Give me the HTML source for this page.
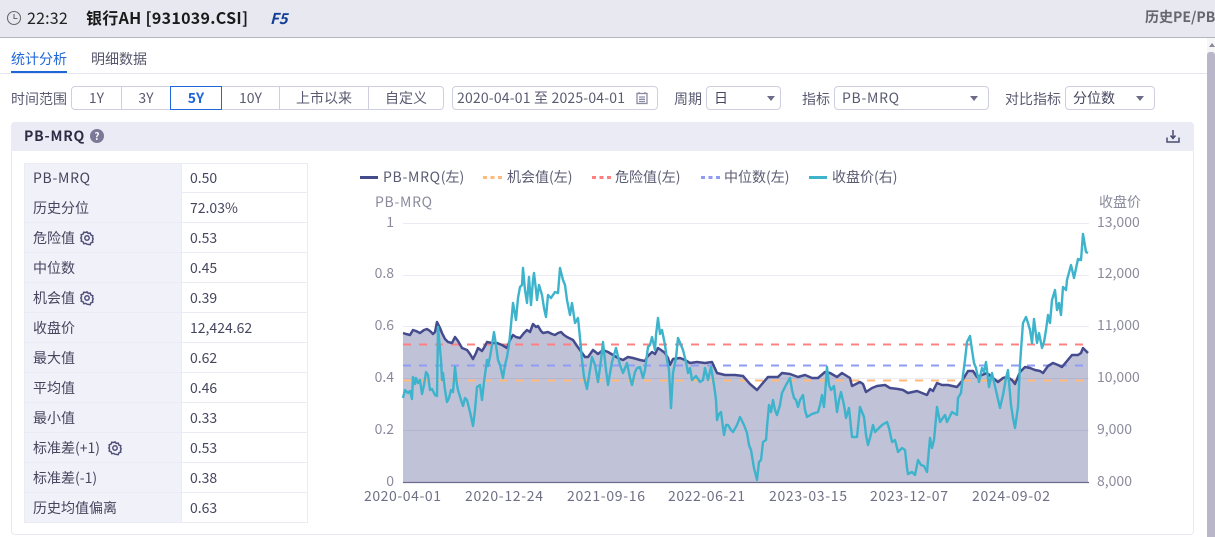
<!DOCTYPE html>
<html><head><meta charset="utf-8">
<style>
html,body{margin:0;padding:0;background:#fff}
body{width:1215px;height:537px;overflow:hidden;position:relative;font-family:"Noto Sans CJK SC","Liberation Sans",sans-serif;font-size:14px;color:#45455e}
.a{position:absolute;white-space:nowrap}
.box{position:absolute;box-sizing:border-box;border:1px solid #cfcfe2;border-radius:4px;height:24px;top:86px;line-height:22px;background:#fff}
.seg{position:absolute;top:86px;height:24px;box-sizing:border-box;line-height:22px;text-align:center;border:1px solid #cfcfe2;border-left:none;color:#5a5a72}
.row{position:absolute;left:24px;width:284px;height:30px;box-sizing:border-box;border:1px solid #ebebf5;border-top:none;line-height:31px}
.row b{font-weight:normal;position:absolute;left:0;top:0;height:29px;overflow:hidden;background:#f1f1f9;border-right:1px solid #ebebf5;padding-left:8px;width:148px}
.row i{font-style:normal;position:absolute;left:165px;top:0}
.tri{position:absolute;top:96px;width:0;height:0;border-left:4px solid transparent;border-right:4px solid transparent;border-top:5px solid #6c6c88}
</style></head><body>
<div class="a" style="left:0;top:0;width:1215px;height:37px;background:#e8e8f1;border-bottom:1px solid #b5b5bd"></div>
<svg class="a" style="left:6px;top:10px" width="16" height="16" viewBox="0 0 16 16" fill="none" stroke="#6a6a6a" stroke-width="1.1"><circle cx="8" cy="8" r="6.5"/><path d="M8 4v4.500h3.500"/></svg>
<div class="a" style="left:27px;top:7px;font-size:16px;line-height:20px;color:#222;letter-spacing:.2px">22:32</div>
<div class="a" style="left:86px;top:7px;font-size:16px;line-height:20px;font-weight:bold;color:#1a1a1a;letter-spacing:.3px">银行AH [931039.CSI]</div>
<div class="a" style="left:270px;top:9px;font-size:15px;line-height:20px;font-weight:bold;font-style:italic;color:#123f96">F5</div>
<div class="a" style="left:1145px;top:8px;font-size:14px;line-height:18px;font-weight:bold;color:#666670">历史PE/PB</div>

<div class="a" style="left:11px;top:50px;line-height:18px;color:#1f66d8">统计分析</div>
<div class="a" style="left:91px;top:50px;line-height:18px;color:#55556b">明细数据</div>
<div class="a" style="left:0;top:73px;width:1207px;height:1px;background:#e6e6f0"></div>
<div class="a" style="left:11px;top:71px;width:56px;height:2px;background:#1f66d8"></div>

<div class="a" style="left:11px;top:90px;line-height:18px;color:#5a5a72">时间范围</div>
<div class="seg" style="left:71px;width:51px;border-left:1px solid #cfcfe2;border-radius:4px 0 0 4px">1Y</div>
<div class="seg" style="left:122px;width:49px">3Y</div>
<div class="seg" style="left:222px;width:58px">10Y</div>
<div class="seg" style="left:280px;width:89px">上市以来</div>
<div class="seg" style="left:369px;width:75px;border-radius:0 4px 4px 0">自定义</div>
<div class="seg" style="left:170px;width:52px;border:1px solid #1f66d8;color:#1f66d8;font-weight:bold">5Y</div>

<div class="box" style="left:452px;width:206px;padding-left:4px;color:#5a5a72;letter-spacing:.18px">2020-04-01 至 2025-04-01</div>
<svg class="a" style="left:635px;top:91px" width="14" height="14" viewBox="0 0 14 14" fill="none" stroke="#8a8aa0" stroke-width="1.3"><rect x="2" y="2.500" width="10" height="10"/><path d="M4 1v2M10 1v2M4 6h6M4 8.300h6M4 10.500h6"/></svg>
<div class="a" style="left:674px;top:90px;line-height:18px;color:#5a5a72">周期</div>
<div class="box" style="left:706px;width:75px;padding-left:7px">日</div><div class="tri" style="left:767px"></div>
<div class="a" style="left:802px;top:90px;line-height:18px;color:#5a5a72">指标</div>
<div class="box" style="left:834px;width:155px;padding-left:7px;color:#5a5a72;letter-spacing:.7px">PB-MRQ</div><div class="tri" style="left:970px"></div>
<div class="a" style="left:1005px;top:90px;line-height:18px;color:#5a5a72">对比指标</div>
<div class="box" style="left:1065px;width:90px;padding-left:7px">分位数</div><div class="tri" style="left:1136px"></div>

<div class="a" style="left:1207px;top:38px;width:8px;height:499px;background:#f6f6f6"></div>
<div class="a" style="left:1207px;top:52px;width:8px;height:485px;background:#b8b6c8;border-radius:3px 3px 0 0"></div>
<div class="a" style="left:1209px;top:43px;width:0;height:0;border-left:3px solid transparent;border-right:3px solid transparent;border-bottom:4px solid #8888a0"></div>

<div class="a" style="left:11px;top:122px;width:1183px;height:413px;box-sizing:border-box;border:1px solid #e8e8f2;border-radius:4px"></div>
<div class="a" style="left:11px;top:122px;width:1183px;height:29px;background:#ebebf5;border-radius:4px 4px 0 0"></div>
<div class="a" style="left:24px;top:127px;line-height:18px;font-weight:bold;color:#2c2c44;letter-spacing:.8px">PB-MRQ</div>
<div class="a" style="left:90px;top:129px;width:14px;height:14px;border-radius:7px;background:#7a7a98;color:#fff;font-size:10px;font-weight:bold;line-height:14px;text-align:center">?</div>
<svg class="a" style="left:1166px;top:129px" width="14" height="14" viewBox="0 0 14 14" fill="none" stroke="#4a4a70" stroke-width="1.500"><path d="M7 1v8M4.500 6.500L7 9.500l2.500-3M1 8.500v4.500h12V8.500"/></svg>

<div class="a" style="left:24px;top:163px;width:284px;height:1px;background:#ebebf5"></div>
<div class="row" style="top:164px;height:29px;line-height:29px"><b style="letter-spacing:.7px">PB-MRQ</b><i>0.50</i></div>
<div class="row" style="top:193px"><b>历史分位</b><i>72.03%</i></div>
<div class="row" style="top:223px"><b>危险值</b><i>0.53</i></div>
<div class="row" style="top:253px"><b>中位数</b><i>0.45</i></div>
<div class="row" style="top:283px"><b>机会值</b><i>0.39</i></div>
<div class="row" style="top:313px"><b>收盘价</b><i>12,424.62</i></div>
<div class="row" style="top:343px"><b>最大值</b><i>0.62</i></div>
<div class="row" style="top:373px"><b>平均值</b><i>0.46</i></div>
<div class="row" style="top:403px"><b>最小值</b><i>0.33</i></div>
<div class="row" style="top:433px"><b>标准差(+1)</b><i>0.53</i></div>
<div class="row" style="top:463px"><b>标准差(-1)</b><i>0.38</i></div>
<div class="row" style="top:493px"><b>历史均值偏离</b><i>0.63</i></div>

<svg class="a" style="left:0;top:0" width="1215" height="537" viewBox="0 0 1215 537">
<defs><g id="gear" fill="none" stroke="#50507a" stroke-width="1.500"><path d="M7 .8l1.200 1.600 2-.3.700 1.900 1.900.7-.3 2L13.200 7.900l-.7 1.600.3 1.600-1.900.7-.7 1.900-2-.3L7 13.200l-1.200-.8-2 .3-.7-1.900-1.900-.7.3-2L.8 7l.7-1.200-.3-2 1.900-.7.7-1.900 2 .3z"/><circle cx="7" cy="7" r="2.200"/></g></defs>
<use href="#gear" x="80" y="231"/><use href="#gear" x="80" y="291"/><use href="#gear" x="108" y="441"/>

<g stroke="#ebebf5" stroke-width="1"><path d="M403 223.500H1089M403 275.500H1089M403 326.500H1089M403 378.500H1089M403 430.500H1089"/></g>
<path fill="#4a5090" fill-opacity=".35" d="M403 333L406 334L410 335L413 330L416 331L420 333L424 330L427 329L430 331L433 334L435 332L437 322L440 328L442 333L445 339L448 342L452 343L455 337L458 341L462 348L467 350L470 354L473 359L476 353L478 348L482 351L485 346L487 342L492 343L497 343L502 345L507 348L510 340L513 335L516 337L520 338L524 333L527 330L530 332L533 324L536 327L538 326L541 331L543 333L548 332L552 334L555 335L558 333L561 332L564 335L567 337L573 340L577 346L580 350L585 357L588 357L593 350L598 354L603 350L608 352L613 355L618 358L623 360L628 357L633 358L640 360L645 361L647 357L652 352L655 354L658 348L661 350L665 353L668 358L670 365L673 359L680 358L685 360L690 363L697 362L705 363L712 362L717 373L725 375L735 375L743 376L750 384L757 390L762 384L768 377L778 377L782 373L790 374L798 377L805 375L812 378L818 378L825 372L830 373L837 377L842 373L850 378L852 386L860 382L863 384L866 392L872 388L877 386L885 385L890 388L898 389L903 390L908 393L917 391L922 393L927 395L930 389L933 391L937 383L942 385L948 385L957 387L962 381L968 371L973 371L977 377L982 375L987 373L993 378L998 382L1003 378L1007 377L1012 380L1015 384L1020 372L1025 367L1030 368L1035 370L1040 371L1043 373L1048 366L1053 363L1058 365L1062 367L1067 361L1072 355L1078 355L1081 353L1083 348L1086 351L1088 353V482H403Z"/>
<g fill="none" stroke-width="2" stroke-dasharray="8 8"><path stroke="#ff8080" d="M403 344.500H1085"/><path stroke="#8f9cf5" d="M403 365.500H1085"/><path stroke="#ffb97a" d="M403 380.500H1085"/></g>
<path fill="none" stroke="#454c8e" stroke-width="2.500" stroke-linejoin="round" d="M403 333L406 334L410 335L413 330L416 331L420 333L424 330L427 329L430 331L433 334L435 332L437 322L440 328L442 333L445 339L448 342L452 343L455 337L458 341L462 348L467 350L470 354L473 359L476 353L478 348L482 351L485 346L487 342L492 343L497 343L502 345L507 348L510 340L513 335L516 337L520 338L524 333L527 330L530 332L533 324L536 327L538 326L541 331L543 333L548 332L552 334L555 335L558 333L561 332L564 335L567 337L573 340L577 346L580 350L585 357L588 357L593 350L598 354L603 350L608 352L613 355L618 358L623 360L628 357L633 358L640 360L645 361L647 357L652 352L655 354L658 348L661 350L665 353L668 358L670 365L673 359L680 358L685 360L690 363L697 362L705 363L712 362L717 373L725 375L735 375L743 376L750 384L757 390L762 384L768 377L778 377L782 373L790 374L798 377L805 375L812 378L818 378L825 372L830 373L837 377L842 373L850 378L852 386L860 382L863 384L866 392L872 388L877 386L885 385L890 388L898 389L903 390L908 393L917 391L922 393L927 395L930 389L933 391L937 383L942 385L948 385L957 387L962 381L968 371L973 371L977 377L982 375L987 373L993 378L998 382L1003 378L1007 377L1012 380L1015 384L1020 372L1025 367L1030 368L1035 370L1040 371L1043 373L1048 366L1053 363L1058 365L1062 367L1067 361L1072 355L1078 355L1081 353L1083 348L1086 351L1088 353"/>
<path fill="none" stroke="#3db3cc" stroke-width="2.400" stroke-linejoin="round" d="M403 398L405 390L408 393L410 391L412 399L413 377L415 384L416 378L418 383L420 380L422 394L424 385L426 372L428 375L430 390L432 389L435 395L437 396L438 327L441 360L442 380L443 373L445 390L447 402L449 398L451 390L453 392L455 367L457 385L458 390L461 400L463 406L465 398L467 400L470 412L473 426L475 410L477 387L480 385L482 400L484 382L487 360L488 366L490 357L492 345L494 332L496 345L498 360L500 365L503 378L505 365L507 357L509 345L511 325L513 303L516 320L518 298L520 287L522 285L523 268L525 290L527 303L529 277L531 305L533 280L534 273L536 290L537 300L539 285L542 295L544 308L546 317L548 295L551 298L555 292L558 293L560 268L563 280L565 285L567 300L570 315L572 303L575 323L578 318L580 338L582 360L584 377L587 389L590 370L592 357L595 365L598 382L601 360L603 342L606 370L608 385L612 362L616 348L620 365L623 373L627 363L630 378L632 385L635 372L637 368L640 367L643 378L645 370L648 347L650 345L652 337L655 350L656 335L658 318L660 334L662 330L665 345L667 360L669 370L671 408L673 373L676 358L678 338L681 345L683 350L686 362L688 373L690 368L692 380L696 376L700 382L703 380L705 368L708 380L711 367L714 385L716 400L717 420L719 414L721 412L723 428L724 435L726 425L728 425L731 430L733 432L737 425L740 417L744 425L747 433L749 445L751 450L754 468L757 480L759 462L761 460L763 442L766 440L767 427L769 405L771 412L773 400L775 410L777 415L780 405L782 393L786 385L790 378L792 390L794 398L796 400L798 407L800 400L803 395L805 410L807 417L812 414L818 412L820 405L822 395L824 407L825 395L827 367L829 385L831 390L834 386L837 412L839 400L841 392L844 405L846 418L849 408L852 437L857 437L860 407L862 412L864 417L866 435L868 445L870 438L873 425L875 432L877 430L882 425L887 422L889 428L892 442L895 440L898 452L902 448L905 450L907 468L908 474L912 472L915 475L918 460L921 465L924 466L927 472L930 438L932 448L934 440L937 407L940 422L945 415L947 422L952 412L957 415L958 398L961 393L963 375L965 360L967 342L970 336L972 350L974 363L976 368L979 382L982 368L984 372L986 362L989 387L992 373L994 382L997 395L1000 408L1003 395L1006 378L1008 370L1011 405L1013 418L1015 428L1018 407L1020 365L1021 350L1023 323L1026 317L1028 323L1030 330L1032 343L1034 319L1037 343L1039 333L1042 348L1044 342L1046 330L1048 315L1050 323L1052 300L1055 290L1057 310L1059 303L1061 315L1063 287L1066 290L1067 280L1071 265L1074 278L1078 259L1081 260L1083 234L1086 252L1088 253"/>
<path stroke="#6c6c90" stroke-width="1.300" d="M403 482.500H1089"/>

<g font-family="'Noto Sans CJK SC','Liberation Sans',sans-serif" font-size="14">
<g stroke-width="3" fill="none"><path stroke="#454c8e" d="M360 177.500H378"/><path stroke="#ffb97a" stroke-dasharray="4 3.500" d="M483 177.500H503"/><path stroke="#ff8080" stroke-dasharray="4 3.500" d="M592 177.500H611"/><path stroke="#8f9cf5" stroke-dasharray="4 3.500" d="M701 177.500H720"/><path stroke="#3db3cc" d="M809 177.500H827"/></g>
<g fill="#5a5a72"><text x="383" y="182"><tspan letter-spacing=".7">PB-MRQ</tspan>(左)</text><text x="507" y="182">机会值(左)</text><text x="615" y="182">危险值(左)</text><text x="724" y="182">中位数(左)</text><text x="832" y="182">收盘价(右)</text></g>
<g fill="#8a8a9c"><text x="375" y="207" letter-spacing=".7">PB-MRQ</text><text x="1099" y="207">收盘价</text>
<g text-anchor="end"><text x="394" y="227">1</text><text x="394" y="278">0.8</text><text x="394" y="330">0.6</text><text x="394" y="382">0.4</text><text x="394" y="434">0.2</text><text x="394" y="486">0</text></g>
<text x="1097" y="227">13,000</text><text x="1097" y="278">12,000</text><text x="1097" y="330">11,000</text><text x="1097" y="382">10,000</text><text x="1097" y="434">9,000</text><text x="1097" y="486">8,000</text></g>
<g fill="#6e6e85"><text x="364" y="501" textLength="77" lengthAdjust="spacing">2020-04-01</text><text x="465" y="501" textLength="78" lengthAdjust="spacing">2020-12-24</text><text x="567" y="501" textLength="78" lengthAdjust="spacing">2021-09-16</text><text x="668" y="501" textLength="77" lengthAdjust="spacing">2022-06-21</text><text x="769" y="501" textLength="78" lengthAdjust="spacing">2023-03-15</text><text x="870" y="501" textLength="78" lengthAdjust="spacing">2023-12-07</text><text x="972" y="501" textLength="78" lengthAdjust="spacing">2024-09-02</text></g>
</g>
</svg>
</body></html>
